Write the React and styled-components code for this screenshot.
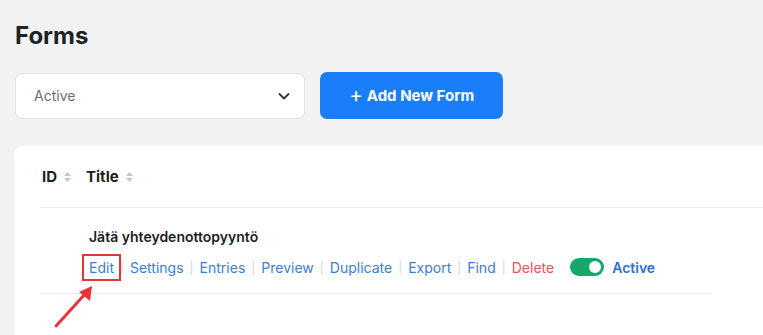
import React from "react";
import styled, { createGlobalStyle } from "styled-components";

const GlobalStyle = createGlobalStyle`
  html, body {
    margin: 0;
    padding: 0;
    background: #f2f2f2;
    overflow: hidden;
  }
  body {
    font-family: "Inter", "Noto Sans", sans-serif;
  }
`;

const actions = [
  { label: "Edit", boxed: true },
  { label: "Settings" },
  { label: "Entries" },
  { label: "Preview" },
  { label: "Duplicate" },
  { label: "Export" },
  { label: "Find" },
  { label: "Delete", danger: true, last: true },
];

function SortIcon() {
  return (
    <svg width="9" height="14" viewBox="0 0 9 14" style={{ marginLeft: 6 }}>
      <path d="M4.5 2 L8 6 H1 Z" fill="#c3c7cc" />
      <path d="M4.5 12 L8 8 H1 Z" fill="#c3c7cc" />
    </svg>
  );
}

function App() {
  return (
    <Page>
      <GlobalStyle />
      <Heading>Forms</Heading>
      <Toolbar>
        <Select>
          <span>Active</span>
          <svg width="14" height="14" viewBox="0 0 14 14">
            <path
              d="M2.5 5 L7 9.5 L11.5 5"
              fill="none"
              stroke="#333"
              strokeWidth="1.8"
              strokeLinecap="round"
              strokeLinejoin="round"
            />
          </svg>
        </Select>
        <PrimaryButton>
          <span className="plus">+</span> Add New Form
        </PrimaryButton>
      </Toolbar>

      <Card>
        <HeaderRow>
          <HeadCell>
            ID <SortIcon />
          </HeadCell>
          <HeadCell>
            Title <SortIcon />
          </HeadCell>
        </HeaderRow>
        <FormRow>
          <FormTitle>Jätä yhteydenottopyyntö</FormTitle>
          <Actions>
            {actions.map((a) => (
              <React.Fragment key={a.label}>
                <ActionLink $danger={a.danger} $boxed={a.boxed}>
                  {a.label}
                </ActionLink>
                {!a.last && <Sep>|</Sep>}
              </React.Fragment>
            ))}
            <Toggle>
              <Knob />
            </Toggle>
            <StatusText>Active</StatusText>
          </Actions>
          <Arrow width="50" height="50" viewBox="0 0 50 50">
            <line
              x1="6"
              y1="44"
              x2="36"
              y2="11"
              stroke="#e8343a"
              strokeWidth="3"
              strokeLinecap="round"
            />
            <path d="M42 4 L40 19 L29 10 Z" fill="#e8343a" />
          </Arrow>
        </FormRow>
      </Card>
    </Page>
  );
}

const Page = styled.div`
  box-sizing: border-box;
  height: 100vh;
  display: flex;
  flex-direction: column;
  padding: 21px 0 0 15px;
`;

const Heading = styled.h1`
  margin: 0;
  font-size: 24px;
  font-weight: 700;
  color: #1d2327;
  line-height: 30px;
`;

const Toolbar = styled.div`
  display: flex;
  align-items: center;
  gap: 15px;
  margin-top: 21px;
`;

const Select = styled.div`
  box-sizing: border-box;
  width: 290px;
  height: 46px;
  background: #fff;
  border: 1px solid #e3e5e8;
  border-radius: 7px;
  display: flex;
  align-items: center;
  justify-content: space-between;
  padding: 0 13px 0 18px;
  font-size: 14px;
  color: #6b6f75;
`;

const PrimaryButton = styled.button`
  box-sizing: border-box;
  height: 47px;
  width: 183px;
  border: none;
  border-radius: 7px;
  background: #1a7efb;
  color: #fff;
  font-family: "Inter", sans-serif;
  font-size: 15px;
  font-weight: 700;
  display: flex;
  align-items: center;
  justify-content: center;
  gap: 4px;

  .plus {
    font-size: 21px;
    font-weight: 400;
    line-height: 1;
    margin-top: -2px;
  }
`;

const Card = styled.div`
  flex: 1;
  margin-top: 27px;
  margin-left: -1px;
  background: #fff;
  border-radius: 9px 0 0 0;
  padding: 0 0 0 26px;
  box-sizing: border-box;
  overflow: hidden;
`;

const HeaderRow = styled.div`
  height: 61px;
  display: flex;
  align-items: center;
  gap: 14px;
  padding-left: 2px;
  border-bottom: 1px solid #eceef1;
`;

const HeadCell = styled.div`
  display: flex;
  align-items: center;
  font-size: 15px;
  font-weight: 700;
  color: #1e1e1e;
`;

const FormRow = styled.div`
  position: relative;
  width: 672px;
  padding: 20px 0 14px 49px;
  border-bottom: 1px solid #eceef1;
  box-sizing: border-box;
`;

const FormTitle = styled.div`
  font-size: 14px;
  font-weight: 600;
  color: #1e1e1e;
  line-height: 18px;
`;

const Actions = styled.div`
  display: flex;
  align-items: center;
  margin-top: 9px;
  font-size: 14px;
  height: 24px;
`;

const ActionLink = styled.span`
  color: ${(p) => (p.$danger ? "#e8525a" : "#3a7fd3")};
  ${(p) =>
    p.$boxed &&
    `
    border: 2px solid #e0353b;
    padding: 3px 5px;
    margin: 0 -7px 0 -7px;
    position: relative;
  `}
`;

const Sep = styled.span`
  color: #d3d6da;
  margin: 0 6px;
  font-size: 12px;
`;

const Toggle = styled.div`
  width: 34px;
  height: 18px;
  border-radius: 9px;
  background: #14a86b;
  margin-left: 16px;
  position: relative;
`;

const Knob = styled.div`
  position: absolute;
  right: 3px;
  top: 3px;
  width: 12px;
  height: 12px;
  border-radius: 50%;
  background: #fff;
`;

const StatusText = styled.span`
  margin-left: 8px;
  font-size: 14px;
  font-weight: 600;
  color: #2d6fd0;
`;

const Arrow = styled.svg`
  position: absolute;
  left: 10px;
  top: 74px;
`;

export default App;
